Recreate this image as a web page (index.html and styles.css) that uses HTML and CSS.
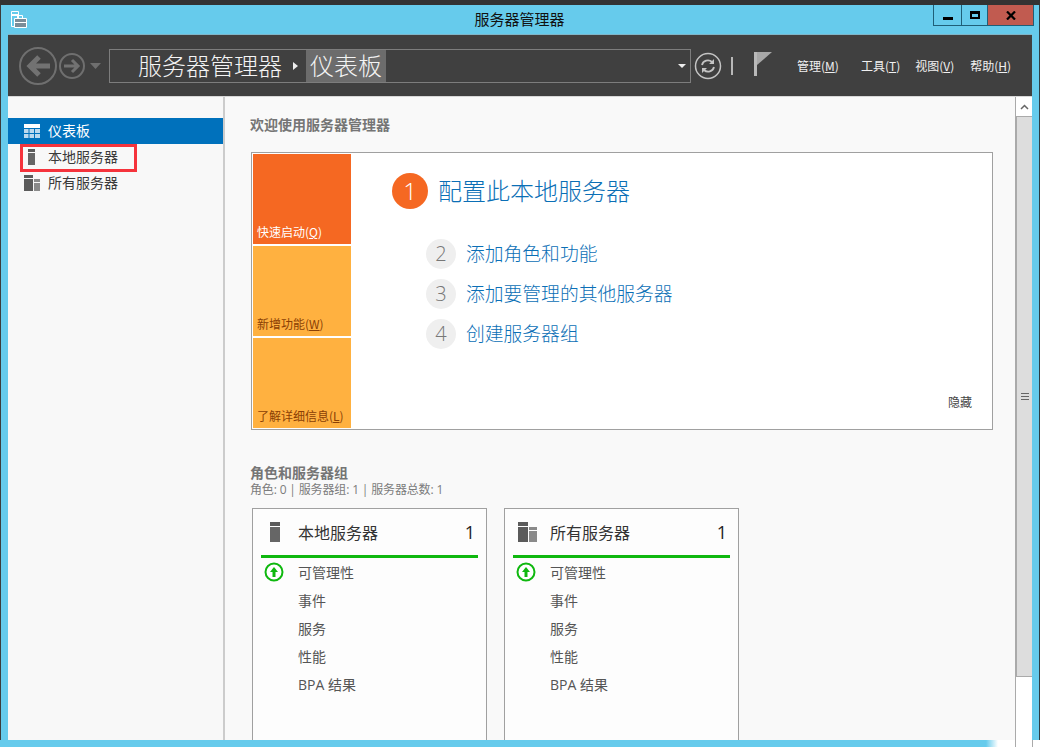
FILE: index.html
```html
<!DOCTYPE html>
<html lang="zh-CN">
<head>
<meta charset="utf-8">
<title>服务器管理器</title>
<link rel="stylesheet" href="styles.css">
</head>
<body>
<div class="top-strip"></div>
<div class="shell">
  <div class="titlebar">
    <svg class="app-icon" width="17" height="17" viewBox="0 0 17 17">
      <path d="M1.500 .5h7v15h-7z" fill="#66cbec" stroke="#fff"/>
      <path d="M1.500 4h7" stroke="#fff" stroke-width="2"/>
      <path d="M4.500 7.500h12v9h-12z" fill="#7b8d99" stroke="#fff"/>
      <path d="M7.500 7V4.500h5V7" fill="none" stroke="#fff"/>
      <path d="M4.500 11.500h12" stroke="#fff"/>
    </svg>
    <div class="win-title">服务器管理器</div>
    <div class="win-btns">
      <div class="win-btn btn-min"><span class="glyph-min"></span></div>
      <div class="win-btn btn-max"><span class="glyph-max"></span></div>
      <div class="win-btn btn-close">
        <svg width="10" height="9" viewBox="0 0 10 9"><path d="M1 .5l8 8M9 .5l-8 8" stroke="#000" stroke-width="2.200" fill="none"/></svg>
      </div>
    </div>
  </div>
  <div class="frame-row">
    <div class="client">
      <div class="navbar">
        <svg class="nav-arrows" width="84" height="40" viewBox="0 0 84 40">
          <circle cx="19" cy="20" r="18" fill="none" stroke="#6f6f6f" stroke-width="2"/>
          <path d="M31 20H11M20 11l-9 9 9 9" fill="none" stroke="#727272" stroke-width="5"/>
          <circle cx="53" cy="20" r="12" fill="none" stroke="#6f6f6f" stroke-width="2"/>
          <path d="M45 20h14M53 14l6 6-6 6" fill="none" stroke="#727272" stroke-width="3"/>
          <path d="M71 17h11l-5.500 6z" fill="#6f6f6f"/>
        </svg>
        <div class="crumb">
          <span class="crumb-root">服务器管理器</span>
          <span class="crumb-sep"></span>
          <span class="crumb-active">仪表板</span>
          <span class="crumb-drop"></span>
        </div>
        <svg class="refresh" width="28" height="28" viewBox="0 0 28 28">
          <circle cx="14" cy="14" r="12.500" fill="none" stroke="#c4c4c4" stroke-width="1.500"/>
          <path d="M8 13a6 6 0 0 1 10-3" fill="none" stroke="#c4c4c4" stroke-width="1.800"/>
          <path d="M20 15a6 6 0 0 1-10 3" fill="none" stroke="#c4c4c4" stroke-width="1.800"/>
          <path d="M20 7v5h-5zM8 21v-5h5z" fill="#c4c4c4"/>
        </svg>
        <span class="nav-sep"></span>
        <svg class="flag" width="18" height="24" viewBox="0 0 18 24">
          <path d="M0 0h3v24H0z" fill="#b9b9b9"/>
          <path d="M3 0h15L3 13z" fill="#a8a8a8"/>
        </svg>
        <div class="menu">
          <span class="menu-item m1">管理(<u>M</u>)</span>
          <span class="menu-item m2">工具(<u>T</u>)</span>
          <span class="menu-item m3">视图(<u>V</u>)</span>
          <span class="menu-item m4">帮助(<u>H</u>)</span>
        </div>
      </div>
      <div class="body-row">
        <aside class="sidebar">
          <div class="side-item selected">
            <svg width="16" height="14" viewBox="0 0 16 14"><path d="M0 0h16v4H0z" fill="#fff"/><path d="M0 5h4.500v4H0zM5.500 5h4.500v4H5.500zM11 5h5v4h-5zM0 10h4.500v4H0zM5.500 10h4.500v4H5.500zM11 10h5v4h-5z" fill="#bcd9ee"/></svg>
            <span class="side-label">仪表板</span>
          </div>
          <div class="side-item marked">
            <svg width="16" height="16" viewBox="0 0 16 16"><path d="M4 0h7v3H4z" fill="#5b5b5b"/><path d="M4 4h7v12H4z" fill="#666"/></svg>
            <span class="side-label">本地服务器</span>
          </div>
          <div class="side-item">
            <svg width="16" height="16" viewBox="0 0 16 16"><path d="M0 0h9v3H0zM0 4h9v12H0z" fill="#5b5b5b"/><path d="M10 4h6v3h-6zM10 8h6v8h-6z" fill="#8a8a8a"/></svg>
            <span class="side-label">所有服务器</span>
          </div>
        </aside>
        <main class="main">
          <h1 class="sec-title">欢迎使用服务器管理器</h1>
          <section class="welcome">
            <div class="tiles">
              <div class="tile tile-start">快速启动(<u>Q</u>)</div>
              <div class="tile tile-alt">新增功能(<u>W</u>)</div>
              <div class="tile tile-alt">了解详细信息(<u>L</u>)</div>
            </div>
            <div class="welcome-body">
              <div class="step-main">
                <span class="num-big">1</span>
                <span class="step-main-text">配置此本地服务器</span>
              </div>
              <div class="steps">
                <div class="step"><span class="num">2</span><span class="step-text">添加角色和功能</span></div>
                <div class="step"><span class="num">3</span><span class="step-text">添加要管理的其他服务器</span></div>
                <div class="step"><span class="num">4</span><span class="step-text">创建服务器组</span></div>
              </div>
              <div class="hide-link">隐藏</div>
            </div>
          </section>
          <h2 class="sec-title roles-title">角色和服务器组</h2>
          <p class="roles-sub">角色: 0 | 服务器组: 1 | 服务器总数: 1</p>
          <div class="cards">
            <article class="card">
              <header class="card-head">
                <svg class="card-icon" width="37" height="20" viewBox="0 0 37 20"><path d="M9 0h10v4H9z" fill="#5b5b5b"/><path d="M9 5h10v15H9z" fill="#666"/></svg>
                <span class="card-name">本地服务器</span>
                <span class="card-count">1</span>
              </header>
              <div class="card-row"><svg class="status" width="37" height="20" viewBox="0 0 37 20"><circle cx="13" cy="10" r="8.500" fill="#fff" stroke="#0fb80f" stroke-width="2"/><path d="M13 15V9" stroke="#0fb80f" stroke-width="3" fill="none"/><path d="M9 10l4-5 4 5z" fill="#0fb80f"/></svg><span>可管理性</span></div>
              <div class="card-row plain">事件</div>
              <div class="card-row plain">服务</div>
              <div class="card-row plain">性能</div>
              <div class="card-row plain">BPA 结果</div>
            </article>
            <article class="card">
              <header class="card-head">
                <svg class="card-icon" width="37" height="20" viewBox="0 0 37 20"><path d="M5 0h10v4H5zM5 5h10v15H5z" fill="#5b5b5b"/><path d="M16 5h8v3h-8zM16 9h8v11h-8z" fill="#8a8a8a"/></svg>
                <span class="card-name">所有服务器</span>
                <span class="card-count">1</span>
              </header>
              <div class="card-row"><svg class="status" width="37" height="20" viewBox="0 0 37 20"><circle cx="13" cy="10" r="8.500" fill="#fff" stroke="#0fb80f" stroke-width="2"/><path d="M13 15V9" stroke="#0fb80f" stroke-width="3" fill="none"/><path d="M9 10l4-5 4 5z" fill="#0fb80f"/></svg><span>可管理性</span></div>
              <div class="card-row plain">事件</div>
              <div class="card-row plain">服务</div>
              <div class="card-row plain">性能</div>
              <div class="card-row plain">BPA 结果</div>
            </article>
          </div>
        </main>
        <div class="scrollbar">
          <div class="scroll-up">
            <svg width="9" height="6" viewBox="0 0 9 6"><path d="M1 5l3.500-3.500L8 5" fill="none" stroke="#666" stroke-width="1.500"/></svg>
          </div>
          <div class="scroll-thumb"><span class="grip"></span></div>
        </div>
      </div>
    </div>
  </div>
</div>
<div class="bottom-strip"></div>
</body>
</html>
```
FILE: styles.css
```css
*, *::before, *::after { box-sizing: border-box; }
html, body { margin: 0; padding: 0; }
body {
  width: 1040px;
  height: 747px;
  overflow: hidden;
  background: #66cbec;
  font-family: "Open Sans", "Noto Sans CJK SC", sans-serif;
  color: #333;
  display: flex;
  flex-direction: column;
}
.top-strip { height: 5px; background: #333; flex: none; }
.shell { flex: none; height: 735px; border-left: 1px solid #3c3c3c; display: flex; flex-direction: column; }

.titlebar {
  flex: none;
  height: 29px;
  display: grid;
  grid-template-columns: 1fr auto 1fr;
  align-items: start;
  padding-left: 9px;
  background: #66cbec;
  border-right: 1px solid #2c3e46;
}
.app-icon { margin-top: 6px; }
.win-title { font-size: 15px; line-height: 27px; color: #111; font-family: "Noto Sans CJK SC", sans-serif; margin: 0 5px 0 -5px; }
.win-btns { justify-self: end; display: flex; height: 21px; margin-right: 5px; border: 1px solid #1f5f78; border-top: 0; }
.win-btn { display: flex; align-items: center; justify-content: center; height: 20px; }
.btn-min { width: 28px; border-right: 1px solid #1f5f78; }
.btn-max { width: 26px; border-right: 1px solid #1f5f78; }
.btn-close { width: 45px; background: #c15b50; }
.glyph-min { width: 10px; height: 3px; background: #000; margin-top: 6px; }
.glyph-max { width: 10px; height: 8px; border: 2px solid #000; border-top-width: 3px; }

.frame-row {
  flex: 1;
  min-height: 0;
  padding: 0 7px;
  border-right: 1px solid #2c3e46;
  display: flex;
  height: 706px;
}
.client { width: 1024px; display: flex; flex-direction: column; height: 706px; border-top: 1px solid #7fb6c9; }

.navbar {
  flex: none;
  height: 62px;
  background: #404040;
  display: flex;
  align-items: center;
  padding-left: 11px;
  color: #f0f0f0;
  border-bottom: 1px solid #d8d8d8;
}
.nav-arrows { flex: none; margin-right: 6px; }
.crumb {
  width: 582px;
  height: 34px;
  border: 1px solid #7d7d7d;
  padding-left: 28px;
  display: flex;
  align-items: stretch;
  font-family: "Noto Sans CJK SC", sans-serif;
  font-weight: 300;
  font-size: 24px;
  line-height: 30px;
  color: #f4f4f4;
}
.crumb-sep { width: 0; height: 0; align-self: center; margin: 0 8px 0 11px; border-left: 5px solid #eee; border-top: 4px solid transparent; border-bottom: 4px solid transparent; }
.crumb-active { background: #6c6c6c; padding: 0 4px; }
.crumb-drop { margin-left: auto; margin-right: 4px; align-self: center; width: 0; height: 0; border-top: 4px solid #eee; border-left: 4px solid transparent; border-right: 4px solid transparent; }
.refresh { margin-left: 3px; flex: none; }
.nav-sep { width: 2px; height: 18px; background: #b8b8b8; margin-left: 9px; flex: none; }
.flag { margin-left: 21px; flex: none; margin-top: -4px; }
.menu { display: flex; font-size: 12px; margin-left: 25px; font-family: "Noto Sans CJK SC", sans-serif; }
.menu-item { white-space: nowrap; }
.m2 { margin-left: 22px; }
.m3 { margin-left: 15px; }
.m4 { margin-left: 16px; }

.body-row { flex: 1; min-height: 0; display: flex; background: #f8f8f8; }
.sidebar { flex: none; width: 217px; padding-top: 21px; border-right: 2px solid #ccc; background: #f8f8f8; font-family: "Noto Sans CJK SC", sans-serif; }
.side-item {
  position: relative;
  height: 26px;
  display: flex;
  align-items: center;
  gap: 8px;
  padding-left: 16px;
  font-size: 14px;
  color: #3a3a3a;
}
.side-label { margin-bottom: 2px; }
.side-item.selected { background: #0071bc; color: #fff; }
.side-item.marked::after {
  content: "";
  position: absolute;
  left: 12px;
  top: 0;
  width: 117px;
  height: 28px;
  border: 3px solid #f5333c;
}

.main { flex: none; width: 790px; height: 643px; overflow: hidden; padding: 17px 0 0 25px; background: #f9f9f9; font-family: "Noto Sans CJK SC", sans-serif; }
.sec-title { margin: 0; font-size: 14px; line-height: 20px; font-weight: 700; color: #757575; }
.welcome {
  margin: 18px 0 0 1px;
  width: 742px;
  height: 278px;
  border: 1px solid #a0a0a0;
  background: #fff;
  padding: 1px;
  display: flex;
}
.tiles { flex: none; width: 98px; display: flex; flex-direction: column; gap: 2px; }
.tile { height: 90px; padding: 0 0 4px 4px; display: flex; align-items: flex-end; font-size: 12px; line-height: 16px; white-space: nowrap; }
.tile-start { background: #f56822; color: #fff; }
.tile-alt { background: #ffb140; color: #8a3f05; }
.welcome-body { flex: 1; padding: 19px 19px 18px 41px; display: flex; flex-direction: column; }
.step-main { display: flex; align-items: center; gap: 10px; height: 36px; flex: none; }
.num-big { width: 36px; height: 36px; border-radius: 50%; background: #f56822; color: #fff; font-size: 24px; font-weight: 300; line-height: 36px; text-align: center; font-family: "Open Sans", sans-serif; }
.step-main-text { font-size: 24px; font-weight: 300; line-height: 36px; color: #0b6fb6; margin-bottom: 3px; }
.steps { margin: 30px 0 0 34px; display: flex; flex-direction: column; gap: 10px; }
.step { display: flex; align-items: center; gap: 10px; height: 30px; }
.num { width: 30px; height: 30px; border-radius: 50%; background: #efefef; color: #777; font-size: 20px; font-weight: 300; line-height: 30px; text-align: center; font-family: "Open Sans", sans-serif; }
.step-text { font-size: 18.8px; font-weight: 300; color: #0b6fb6; line-height: 30px; margin-bottom: 2px; }
.hide-link { margin-top: auto; align-self: flex-end; font-size: 12px; line-height: 16px; color: #444; }

.roles-title { margin-top: 33px; line-height: 18px; }
.roles-sub { margin: 2px 0 0; font-size: 12px; line-height: 14px; color: #7c7c7c; letter-spacing: -0.15px; font-family: "Open Sans", "Noto Sans CJK SC", sans-serif; }
.cards { display: flex; gap: 17px; margin: 11px 0 0 2px; }
.card { flex: none; width: 235px; height: 260px; border: 1px solid #a0a0a0; background: #fdfdfd; padding: 0 8px; }
.card-head { height: 49px; border-bottom: 3px solid #0fb80f; display: flex; align-items: center; padding-right: 3px; }
.card-icon { flex: none; }
.card-name { font-size: 16px; color: #333; flex: 1; font-weight: 400; }
.card-count { font-size: 18px; font-weight: 400; color: #222; font-family: "Open Sans", sans-serif; }
.card-row { height: 28px; display: flex; align-items: center; font-size: 14px; color: #555; font-family: "Open Sans", "Noto Sans CJK SC", sans-serif; }
.card-row.plain { padding-left: 37px; }
.status { flex: none; }

.scrollbar { flex: none; width: 17px; background: #fff; border-left: 1px solid #aaa; display: flex; flex-direction: column; padding-top: 1px; }
.scroll-up { height: 18px; display: flex; align-items: center; justify-content: center; }
.scroll-thumb { height: 561px; background: #ddd; border: 1px solid #aaa; border-right: 0; display: flex; align-items: center; justify-content: center; }
.grip { width: 8px; height: 7px; border-top: 1px solid #666; border-bottom: 1px solid #666; background: linear-gradient(#666, #666) center / 100% 1px no-repeat; }

.bottom-strip {
  flex: none;
  height: 7px;
  background:
    linear-gradient(#aaa, #aaa) 1015px 0 / 1px 100% no-repeat,
    linear-gradient(#aaa, #aaa) 1032px 0 / 1px 100% no-repeat,
    linear-gradient(90deg, #66cbec 986px, #fff 998px);
}
```
